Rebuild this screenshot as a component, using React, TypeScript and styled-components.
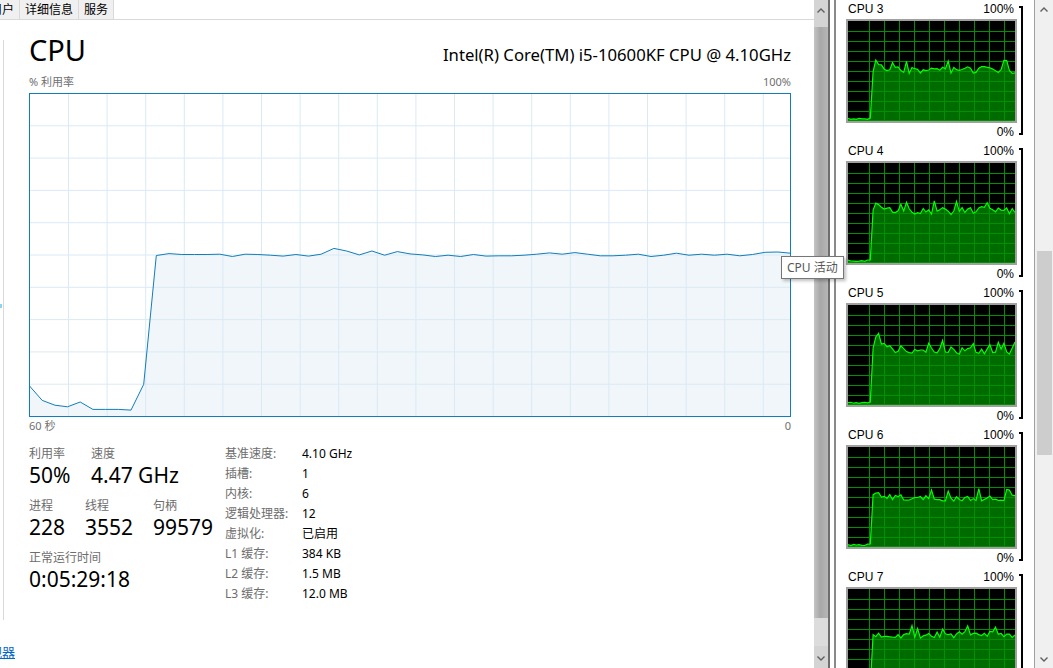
import styled, { createGlobalStyle } from 'styled-components';

const GlobalStyle = createGlobalStyle`
  html, body {
    margin: 0;
    padding: 0;
    background: #fff;
    overflow: hidden;
  }
  body {
    font-family: "Noto Sans", "Noto Sans CJK SC", sans-serif;
  }
`;

// 最近 60 秒的 CPU 利用率
const usage = [
  9.5, 5, 3.5, 3, 4.5, 2.2, 2.2, 2.2, 2, 10, 50, 50.6, 50.3, 50.3, 50.3, 50.4,
  49.7, 50.4, 50.3, 50.1, 49.8, 50.3, 49.8, 50.4, 52.2, 51.4, 50.2, 51.4, 50.1,
  51.2, 50.5, 50.2, 49.7, 50.1, 49.7, 50.3, 49.8, 49.9, 49.9, 50.1, 50.4, 50.8,
  50.4, 50.9, 50.4, 49.9, 49.9, 50.1, 50.4, 49.7, 50.1, 50.7, 50.1, 50.4, 50.1,
  50.4, 49.9, 50.3, 51, 51.1, 50.7,
];

const GW = 762;
const GH = 324;
const mainPts = usage.map((v, i) => [0.5 + (i * 761) / 60, 323.5 - (v / 100) * 322]);
const mainLine = mainPts.map(([x, y]) => `${x.toFixed(1)},${y.toFixed(1)}`).join(' ');
const mainArea = `0.5,323.5 ${mainLine} 761.5,323.5`;

function rng(seed: number) {
  return () => {
    seed = (seed + 0x6d2b79f5) | 0;
    let t = Math.imul(seed ^ (seed >>> 15), 1 | seed);
    t = (t + Math.imul(t ^ (t >>> 7), 61 | t)) ^ t;
    return ((t ^ (t >>> 14)) >>> 0) / 4294967296;
  };
}

function makeCore(seed: number, base: number, peak: number) {
  const r = rng(seed);
  const out: number[] = [];
  for (let i = 0; i <= 60; i++) {
    if (i <= 8) {
      out.push(i === 8 ? 3 : 1.5 + r() * 1.5);
    } else {
      let v = base + (r() - 0.5) * 7;
      if (r() < 0.12) v += 7;
      if (i >= 10 && i <= 14) v += peak * (1 - (i - 10) / 5);
      out.push(v);
    }
  }
  return out;
}

const cores = [
  { name: 'CPU 3', data: makeCore(3, 51, 5) },
  { name: 'CPU 4', data: makeCore(4, 52, 6) },
  { name: 'CPU 5', data: makeCore(5, 54, 12) },
  { name: 'CPU 6', data: makeCore(6, 49, 2) },
  { name: 'CPU 7', data: makeCore(7, 54, 0) },
];

const specs = [
  ['基准速度:', '4.10 GHz'],
  ['插槽:', '1'],
  ['内核:', '6'],
  ['逻辑处理器:', '12'],
  ['虚拟化:', '已启用'],
  ['L1 缓存:', '384 KB'],
  ['L2 缓存:', '1.5 MB'],
  ['L3 缓存:', '12.0 MB'],
];

const CoreGraph = ({ data }: { data: number[] }) => {
  const pts = data.map((v, i) => `${((i * 167) / 60).toFixed(1)},${(100 - v).toFixed(1)}`).join(' ');
  return (
    <svg width="167" height="100" viewBox="0 0 167 100">
      <rect width="167" height="100" fill="#000" />
      <polygon points={`0,100 ${pts} 167,100`} fill="#006c00" />
      {Array.from({ length: 9 }, (_, k) => (
        <line key={'h' + k} x1="0" x2="167" y1={10.5 + k * 10} y2={10.5 + k * 10} stroke="#009000" />
      ))}
      {Array.from({ length: 10 }, (_, k) => (
        <line key={'v' + k} x1={21.5 + k * 15} x2={21.5 + k * 15} y1="0" y2="100" stroke="#009000" />
      ))}
      <line x1="0" x2="167" y1="99.5" y2="99.5" stroke="#009000" />
      <polyline points={pts} fill="none" stroke="#00ff00" strokeWidth="1.2" />
    </svg>
  );
};

const ChevronUp = () => (
  <svg width="8" height="5" viewBox="0 0 8 5">
    <path d="M0.5 4.5 L4 1 L7.5 4.5" fill="none" stroke="#606060" strokeWidth="1.4" />
  </svg>
);

const ChevronDown = () => (
  <svg width="8" height="5" viewBox="0 0 8 5">
    <path d="M0.5 0.5 L4 4 L7.5 0.5" fill="none" stroke="#606060" strokeWidth="1.4" />
  </svg>
);

const App = () => {
  return (
    <Screen>
      <GlobalStyle />
      <TaskWindow>
        <TabStrip>
          <Tab>用户</Tab>
          <Tab>详细信息</Tab>
          <Tab>服务</Tab>
        </TabStrip>
        <Body>
          <SideEdge>
            <SideMark />
          </SideEdge>
          <Content>
            <Header>
              <Title>CPU</Title>
              <CpuModel>Intel(R) Core(TM) i5-10600KF CPU @ 4.10GHz</CpuModel>
            </Header>
            <AxisRow>
              <span>% 利用率</span>
              <span>100%</span>
            </AxisRow>
            <GraphBox>
              <svg width={GW} height={GH} viewBox={`0 0 ${GW} ${GH}`}>
                <rect width={GW} height={GH} fill="#fff" />
                <polygon points={mainArea} fill="#f1f6fa" />
                {Array.from({ length: 9 }, (_, k) => (
                  <line key={'h' + k} x1="0" x2={GW} y1={0.5 + (k + 1) * 32.3} y2={0.5 + (k + 1) * 32.3} stroke="#d9eaf4" />
                ))}
                {Array.from({ length: 19 }, (_, k) => (
                  <line key={'v' + k} x1={39.5 + k * 38.6} x2={39.5 + k * 38.6} y1="0" y2={GH} stroke="#d9eaf4" />
                ))}
                <polyline points={mainLine} fill="none" stroke="#117dbb" strokeWidth="1" />
                <rect x="0.5" y="0.5" width={GW - 1} height={GH - 1} fill="none" stroke="#117dbb" />
              </svg>
            </GraphBox>
            <AxisRow>
              <span>60 秒</span>
              <span>0</span>
            </AxisRow>
            <StatsArea>
              <LeftStats>
                <StatRow>
                  <Stat $width={62}>
                    <StatLabel>利用率</StatLabel>
                    <StatValue>50%</StatValue>
                  </Stat>
                  <Stat>
                    <StatLabel>速度</StatLabel>
                    <StatValue>4.47 GHz</StatValue>
                  </Stat>
                </StatRow>
                <StatRow>
                  <Stat $width={56}>
                    <StatLabel>进程</StatLabel>
                    <StatValue>228</StatValue>
                  </Stat>
                  <Stat $width={68}>
                    <StatLabel>线程</StatLabel>
                    <StatValue>3552</StatValue>
                  </Stat>
                  <Stat>
                    <StatLabel>句柄</StatLabel>
                    <StatValue>99579</StatValue>
                  </Stat>
                </StatRow>
                <StatRow>
                  <Stat>
                    <StatLabel>正常运行时间</StatLabel>
                    <StatValue>0:05:29:18</StatValue>
                  </Stat>
                </StatRow>
              </LeftStats>
              <SpecTable>
                {specs.map(([k, v]) => (
                  <SpecLine key={k}>
                    <SpecKey>{k}</SpecKey>
                    <SpecVal>{v}</SpecVal>
                  </SpecLine>
                ))}
              </SpecTable>
            </StatsArea>
          </Content>
        </Body>
        <Footer>
          <MonitorLink>打开资源监视器</MonitorLink>
        </Footer>
      </TaskWindow>

      <ClassicScroll>
        <ClassicArrow $top>
          <ChevronUp />
        </ClassicArrow>
        <ClassicThumb />
        <ClassicTrack />
        <ClassicArrow>
          <ChevronDown />
        </ClassicArrow>
      </ClassicScroll>

      <FrameGap />

      <PerfWindow>
        <CoreList>
          {cores.map((c) => (
            <CoreBlock key={c.name}>
              <CoreMain>
                <CoreTop>
                  <span>{c.name}</span>
                  <span>100%</span>
                </CoreTop>
                <CoreFrame>
                  <CoreGraph data={c.data} />
                </CoreFrame>
                <CoreBottom>0%</CoreBottom>
              </CoreMain>
              <Bracket />
            </CoreBlock>
          ))}
        </CoreList>
      </PerfWindow>

      <FlatScroll>
        <FlatArrow>
          <ChevronUp />
        </FlatArrow>
        <FlatTrack>
          <FlatThumb />
        </FlatTrack>
        <FlatArrow>
          <ChevronDown />
        </FlatArrow>
      </FlatScroll>

      <Tooltip>CPU 活动</Tooltip>
    </Screen>
  );
};

export default App;

const Screen = styled.div`
  position: relative;
  display: flex;
  width: 1053px;
  height: 668px;
  overflow: hidden;
  background: #fff;
`;

const TaskWindow = styled.div`
  width: 814px;
  flex-shrink: 0;
  display: flex;
  flex-direction: column;
  overflow: hidden;
`;

const TabStrip = styled.div`
  display: flex;
  height: 19px;
  margin-left: -15px;
  border-bottom: 1px solid #d9d9d9;
`;

const Tab = styled.div`
  padding: 0 5px;
  line-height: 19px;
  font-size: 12px;
  color: #000;
  background: #f0f0f0;
  border-right: 1px solid #d9d9d9;
`;

const Body = styled.div`
  flex: 1;
  display: flex;
  min-height: 0;
`;

const SideEdge = styled.div`
  width: 3px;
  height: 580px;
  margin-top: 20px;
  border-right: 1px solid #d9d9d9;
  flex-shrink: 0;
`;

const SideMark = styled.div`
  width: 2px;
  height: 4px;
  margin-top: 264px;
  background: #8fd0f5;
`;

const Content = styled.div`
  flex: 1;
  padding: 0 24px 0 25px;
  display: flex;
  flex-direction: column;
`;

const Header = styled.div`
  display: flex;
  justify-content: space-between;
  align-items: baseline;
  padding-top: 12px;
  height: 48px;
  box-sizing: border-box;
`;

const Title = styled.div`
  font-size: 29px;
  line-height: 36px;
  color: #000;
`;

const CpuModel = styled.div`
  font-size: 16.7px;
  line-height: 22px;
  color: #000;
`;

const AxisRow = styled.div`
  display: flex;
  justify-content: space-between;
  font-size: 11px;
  line-height: 14px;
  color: #707070;
  margin: 7px 0 4px;
`;

const GraphBox = styled.div`
  width: ${GW}px;
  height: ${GH}px;

  svg {
    display: block;
  }

  & + ${AxisRow} {
    margin: 2px 0 0;
  }
`;

const StatsArea = styled.div`
  display: flex;
  margin-top: 13px;
`;

const LeftStats = styled.div`
  width: 196px;
  display: flex;
  flex-direction: column;
  gap: 9px;
`;

const StatRow = styled.div`
  display: flex;
`;

const Stat = styled.div<{ $width?: number }>`
  width: ${(p) => (p.$width ? `${p.$width}px` : 'auto')};
  display: flex;
  flex-direction: column;
`;

const StatLabel = styled.div`
  font-size: 12px;
  line-height: 16px;
  color: #6d6d6d;
`;

const StatValue = styled.div`
  font-size: 21px;
  line-height: 27px;
  color: #000;
  white-space: nowrap;
`;

const SpecTable = styled.div`
  display: flex;
  flex-direction: column;
  margin-top: -2px;
`;

const SpecLine = styled.div`
  display: flex;
  font-size: 12px;
  line-height: 20px;
`;

const SpecKey = styled.div`
  width: 77px;
  color: #6d6d6d;
`;

const SpecVal = styled.div`
  color: #000;
`;

const Footer = styled.div`
  height: 48px;
  flex-shrink: 0;
  padding-top: 20px;
  box-sizing: border-box;
`;

const MonitorLink = styled.a`
  display: inline-block;
  margin-left: -76px;
  font-size: 13px;
  line-height: 18px;
  color: #0066cc;
  text-decoration: underline;
  cursor: pointer;
`;

const ClassicScroll = styled.div`
  width: 14px;
  flex-shrink: 0;
  display: flex;
  flex-direction: column;
  background: #d9d9d9;
`;

const ClassicArrow = styled.div<{ $top?: boolean }>`
  height: ${(p) => (p.$top ? 27 : 22)}px;
  display: flex;
  justify-content: center;
  align-items: ${(p) => (p.$top ? 'flex-start' : 'flex-end')};
  padding: ${(p) => (p.$top ? '8px 0 0' : '0 0 7px')};
  box-sizing: border-box;
  background: #d4d4d4;
`;

const ClassicThumb = styled.div`
  height: 591px;
  background: linear-gradient(to right, #c4c4c4, #a8a8a8 45%, #b6b6b6);
`;

const ClassicTrack = styled.div`
  flex: 1;
  background: #dcdcdc;
`;

const FrameGap = styled.div`
  width: 4px;
  flex-shrink: 0;
  border-left: 2px solid #6e6e6e;
  border-right: 2px solid #8a8a8a;
  background: #fff;
`;

const PerfWindow = styled.div`
  width: 198px;
  flex-shrink: 0;
  padding-left: 10px;
  box-sizing: border-box;
  overflow: hidden;
  font-family: "Liberation Sans", "DejaVu Sans", sans-serif;
`;

const CoreList = styled.div`
  margin-top: -1px;
  display: flex;
  flex-direction: column;
`;

const CoreBlock = styled.div`
  height: 142px;
  display: flex;
  align-items: flex-start;
  gap: 2px;
`;

const CoreMain = styled.div`
  width: 171px;
  display: flex;
  flex-direction: column;
`;

const CoreTop = styled.div`
  display: flex;
  justify-content: space-between;
  padding: 0 3px 0 2px;
  height: 20px;
  font-size: 12px;
  line-height: 20px;
  color: #000;
`;

const CoreFrame = styled.div`
  border: 2px solid #a0a0a0;
  width: 167px;
  height: 100px;

  svg {
    display: block;
  }
`;

const CoreBottom = styled.div`
  margin-top: 1px;
  padding-right: 3px;
  text-align: right;
  font-size: 12px;
  line-height: 16px;
  color: #000;
`;

const Bracket = styled.div`
  width: 2px;
  height: 125px;
  margin-top: 7px;
  border: 2px solid #000;
  border-left: none;
`;

const FlatScroll = styled.div`
  flex: 1;
  display: flex;
  flex-direction: column;
  border-left: 1px solid #a0a0a0;
  background: #f0f0f0;
`;

const FlatArrow = styled.div`
  height: 18px;
  display: flex;
  justify-content: center;
  align-items: center;
`;

const FlatTrack = styled.div`
  flex: 1;
  padding: 233px 1px 0 2px;
`;

const FlatThumb = styled.div`
  height: 204px;
  background: #cdcdcd;
`;

const Tooltip = styled.div`
  position: absolute;
  left: 781px;
  top: 256px;
  height: 21px;
  padding: 0 5px;
  border: 1px solid #767676;
  background: #fff;
  box-shadow: 2px 2px 3px rgba(0, 0, 0, 0.25);
  font-size: 12px;
  line-height: 21px;
  color: #575757;
  white-space: nowrap;
`;
